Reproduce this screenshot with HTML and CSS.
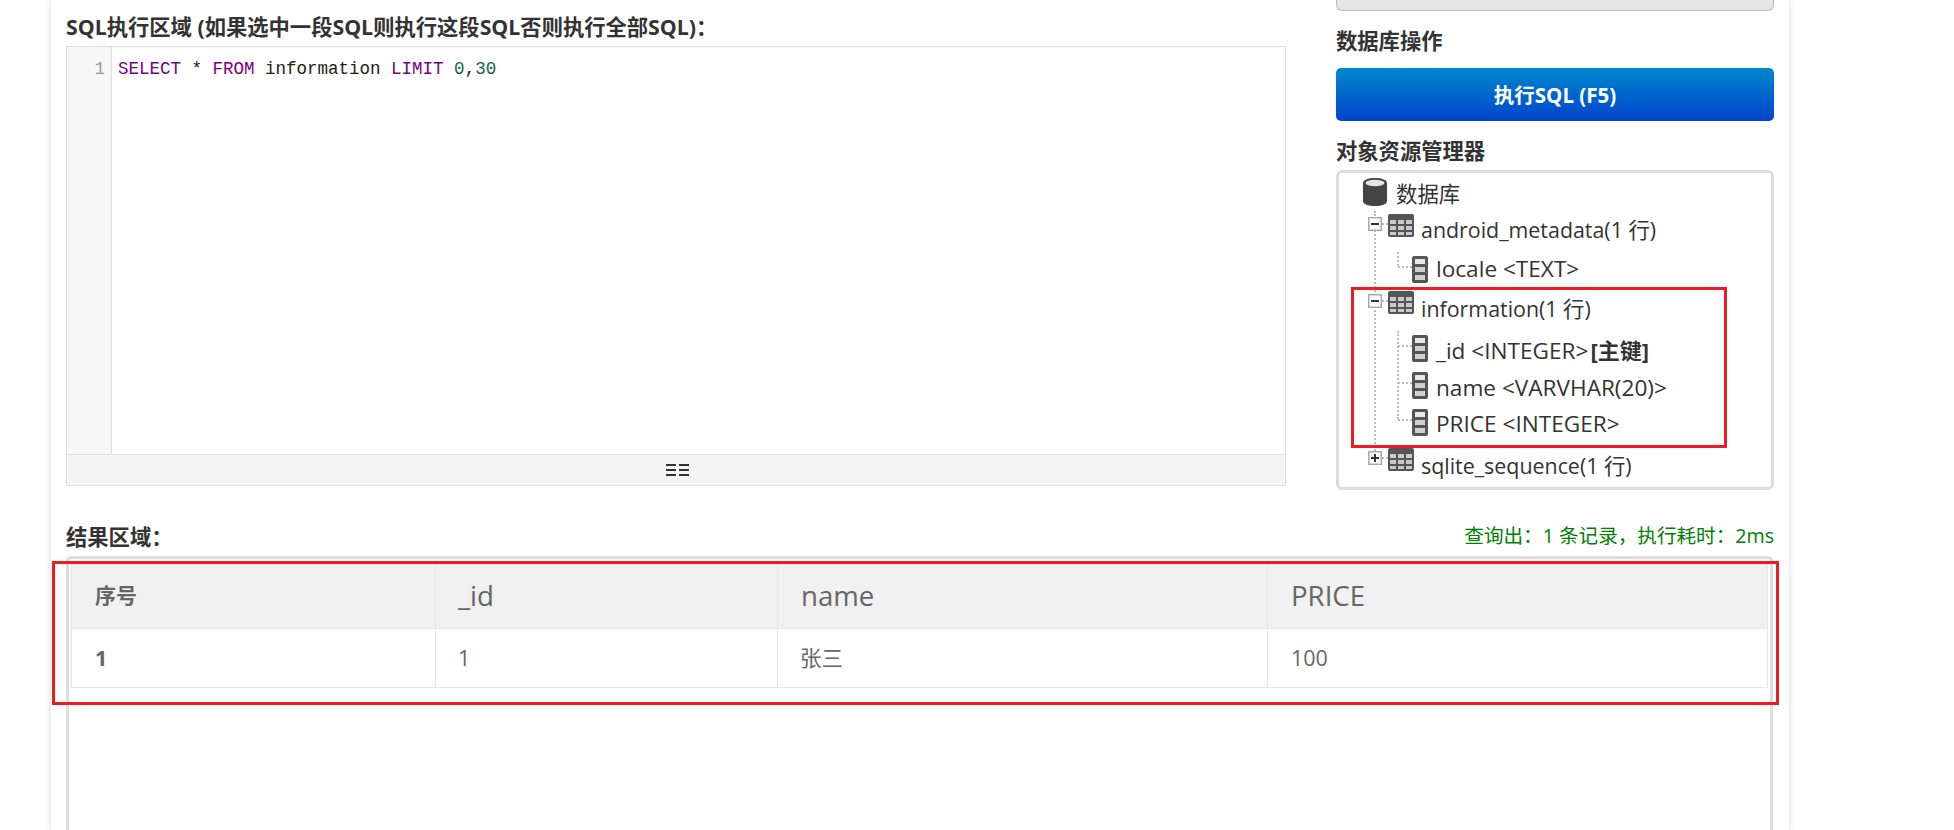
FILE: index.html
```html
<!DOCTYPE html>
<html lang="zh-CN">
<head>
<meta charset="utf-8">
<title>SQL</title>
<link rel="stylesheet" href="styles.css">
</head>
<body>
<svg class="defs" width="0" height="0" aria-hidden="true">
  <symbol id="i-table" viewBox="0 0 26 23">
    <rect x="0" y="0" width="26" height="23" rx="2" fill="#555"/>
    <g fill="#c9c9c9">
      <rect x="2" y="6" width="6" height="4"/><rect x="10" y="6" width="6" height="4"/><rect x="18" y="6" width="6" height="4"/>
      <rect x="2" y="12" width="6" height="4"/><rect x="10" y="12" width="6" height="4"/><rect x="18" y="12" width="6" height="4"/>
      <rect x="2" y="18" width="6" height="3"/><rect x="10" y="18" width="6" height="3"/><rect x="18" y="18" width="6" height="3"/>
    </g>
  </symbol>
  <symbol id="i-col" viewBox="0 0 16 27">
    <rect x="0" y="0" width="16" height="27" rx="2" fill="#555"/>
    <rect x="3" y="3" width="10" height="5" fill="#e8e8e8"/>
    <rect x="3" y="11" width="10" height="5" fill="#d0d0d0"/>
    <rect x="3" y="19" width="10" height="5" fill="#d0d0d0"/>
  </symbol>
  <symbol id="i-minus" viewBox="0 0 14 14">
    <rect x="0.75" y="0.75" width="12.5" height="12.5" fill="#fff" stroke="#aaa" stroke-width="1.5"/>
    <rect x="3" y="6" width="8" height="2" fill="#333"/>
  </symbol>
  <symbol id="i-plus" viewBox="0 0 14 14">
    <rect x="0.75" y="0.75" width="12.5" height="12.5" fill="#fff" stroke="#aaa" stroke-width="1.5"/>
    <rect x="3" y="6" width="8" height="2" fill="#333"/>
    <rect x="6" y="3" width="2" height="8" fill="#333"/>
  </symbol>
</svg>
<main class="card">
  <div class="top">
    <section class="left">
      <h2 class="title">SQL执行区域 (如果选中一段SQL则执行这段SQL否则执行全部SQL)：</h2>
      <div class="editor">
        <div class="editor-body">
          <div class="gutter">1</div>
          <div class="code"><span class="kw">SELECT</span> * <span class="kw">FROM</span> information <span class="kw">LIMIT</span> <span class="num">0</span>,<span class="num">30</span></div>
        </div>
        <div class="resize">
          <svg width="23" height="12" viewBox="0 0 23 12" aria-hidden="true">
            <path d="M0 1h10M0 6h10M0 11h10M13 1h10M13 6h10M13 11h10" stroke="#333" stroke-width="2" fill="none"/>
          </svg>
        </div>
      </div>
    </section>
    <aside class="right">
      <div class="stub"></div>
      <h2 class="title side-title">数据库操作</h2>
      <button class="run" type="button">执行SQL (F5)</button>
      <h2 class="title side-title2">对象资源管理器</h2>
      <div class="tree">
        <div class="row row-db">
          <svg class="ic-db" width="24" height="28" viewBox="0 0 24 28" aria-hidden="true">
            <path d="M0 5C0 2 5 0 12 0s12 2 12 5v18c0 3-5 5-12 5S0 26 0 23z" fill="#444"/>
            <ellipse cx="12" cy="5" rx="9.5" ry="3.2" fill="#e4e4e4"/>
          </svg>
          <span>数据库</span>
        </div>
        <div class="node">
          <div class="row row-t row-first">
            <svg class="ic-exp"><use href="#i-minus"/></svg><i class="dash"></i>
            <svg class="ic-t"><use href="#i-table"/></svg>
            <span>android_metadata(1 行)</span>
          </div>
          <div class="kids kids-one">
            <div class="row row-c row-lo">
              <i class="branch"></i><svg class="ic-c"><use href="#i-col"/></svg>
              <span>locale &lt;TEXT&gt;</span>
            </div>
          </div>
          <div class="row row-t row-info">
            <svg class="ic-exp"><use href="#i-minus"/></svg><i class="dash"></i>
            <svg class="ic-t"><use href="#i-table"/></svg>
            <span>information(1 行)</span>
          </div>
          <div class="kids">
            <div class="row row-c">
              <i class="branch"></i><svg class="ic-c"><use href="#i-col"/></svg>
              <span class="txt-id">_id &lt;INTEGER&gt;<b class="pk">[主键]</b></span>
            </div>
            <div class="row row-c">
              <i class="branch"></i><svg class="ic-c"><use href="#i-col"/></svg>
              <span class="txt-name">name &lt;VARVHAR(20)&gt;</span>
            </div>
            <div class="row row-c">
              <i class="branch"></i><svg class="ic-c"><use href="#i-col"/></svg>
              <span class="txt-id">PRICE &lt;INTEGER&gt;</span>
            </div>
          </div>
          <div class="row row-t row-last">
            <svg class="ic-exp"><use href="#i-plus"/></svg><i class="dash"></i>
            <svg class="ic-t"><use href="#i-table"/></svg>
            <span>sqlite_sequence(1 行)</span>
          </div>
        </div>
        <div class="mark mark-tree"></div>
      </div>
    </aside>
  </div>
  <div class="result-head">
    <h2 class="title">结果区域：</h2>
    <span class="stat">查询出：1 条记录，执行耗时：2ms</span>
  </div>
  <div class="result">
    <table class="grid">
      <colgroup><col class="c1"><col class="c2"><col class="c3"><col></colgroup>
      <thead><tr><th class="th-cn">序号</th><th class="th-id">_id</th><th>name</th><th>PRICE</th></tr></thead>
      <tbody><tr><td class="idx">1</td><td class="td-id">1</td><td class="td-cn">张三</td><td>100</td></tr></tbody>
    </table>
    <div class="mark mark-table"></div>
  </div>
</main>
</body>
</html>
```
FILE: styles.css
```css
* { box-sizing: border-box; }
html, body { margin: 0; height: 830px; overflow: hidden; background: #fff; }
body {
  font-family: "Open Sans", "Noto Sans CJK SC", sans-serif;
  color: #333;
}
.defs { position: absolute; }
.card {
  margin-left: 51px;
  width: 1738px;
  height: 830px;
  padding: 0 15px;
  background: #fff;
  box-shadow: 0 0 8px rgba(0,0,0,.14);
}
.top { display: flex; justify-content: space-between; height: 517px; }
.left { width: 1220px; padding-top: 14px; }
.right { width: 438px; }
.title {
  margin: 0;
  font-size: 21.3px;
  line-height: 26px;
  font-weight: 700;
  color: #333;
}
.left .title { height: 32px; }
.editor { height: 440px; border: 1px solid #ddd; display: flex; flex-direction: column; }
.editor-body { flex: 1; display: flex; min-height: 0; }
.gutter {
  width: 45px;
  padding: 12px 6px 0 0;
  text-align: right;
  background: #f7f7f7;
  border-right: 1px solid #ddd;
  color: #999;
  font: 17.5px/21px "Liberation Mono", monospace;
}
.code {
  padding: 12px 0 0 6px;
  font: 17.5px/21px "Liberation Mono", monospace;
  color: #221;
}
.kw { color: #708; }
.num { color: #164; }
.resize {
  display: flex;
  justify-content: center;
  align-items: center;
  height: 31px;
  background: #f5f5f5;
  border-top: 1px solid #ddd;
  padding-left: 3px;
}
.stub {
  height: 11px;
  background: #e6e6e6;
  border: 1px solid #bbb;
  border-top: 0;
  border-radius: 0 0 6px 6px;
}
.side-title { margin-top: 17px; }
.run {
  display: block;
  width: 100%;
  height: 53px;
  margin-top: 14px;
  border: 0;
  border-radius: 5px;
  color: #fff;
  font: 700 20.5px/53px "Open Sans", "Noto Sans CJK SC", sans-serif;
  background: linear-gradient(#0088cc, #0044cc);
}
.side-title2 { margin-top: 17px; }
.tree {
  position: relative;
  height: 320px;
  margin-top: 6px;
  padding: 5px 0 0 24px;
  border: 3px solid #ddd;
  border-radius: 6px;
  font-size: 21.4px;
  color: #333;
}
.row { display: flex; align-items: flex-start; white-space: nowrap; }
.row span { line-height: 34px; }
.row-db { height: 34px; gap: 9px; }
.row-db span { margin-top: -1px; }
.ic-db { flex: none; }
.node { position: relative; margin-left: 5px; }
.node::before {
  content: "";
  position: absolute;
  left: 6px;
  top: -1px;
  height: 240px;
  border-left: 2px dotted #bbb;
}
.row-t { position: relative; height: 40px; padding-top: 2px; }
.row-last { margin-top: 4px; }
.row-t span { margin: 1px 0 0 7px; }
.row-first span { margin-top: -1px; }
.ic-exp { width: 14px; height: 14px; margin-top: 3px; flex: none; position: relative; z-index: 1; }
.dash { width: 6px; margin-top: 9px; border-top: 2px dotted #bbb; flex: none; }
.ic-t { width: 26px; height: 23px; flex: none; }
.kids { position: relative; padding-left: 24px; margin-top: 2px; }
.kids-one { margin-top: 0; height: 37px; }
.kids::before {
  content: "";
  position: absolute;
  left: 29px;
  top: 0;
  height: 88px;
  border-left: 2px dotted #bbb;
}
.kids-one::before { height: 14px; }
.row-c { height: 37px; font-size: 22.6px; }
.row-c span { margin: -1px 0 0 8px; line-height: 36px; }
.row-c .txt-id { margin-top: 1px; }
.row-c .txt-name { margin-top: 2px; }
.branch { width: 14px; margin: 14px 0 0 6px; border-top: 2px dotted #bbb; flex: none; }
.ic-c { width: 16px; height: 27px; margin-top: 4px; flex: none; position: relative; }
.pk { font-weight: 700; margin-left: 2px; font-size: 22px; }
.mark { position: absolute; border: 3px solid #ed1c24; pointer-events: none; }
.mark-tree { left: 12px; top: 114px; width: 376px; height: 161px; }
.result-head {
  display: flex;
  justify-content: space-between;
  align-items: center;
  height: 39px;
}
.stat { color: #008000; font-size: 19.6px; padding-bottom: 4px; }
.result {
  position: relative;
  height: 300px;
  width: 1707px;
  padding: 4px 2px 0;
  border: 3px solid #ddd;
  border-bottom: 0;
  border-radius: 5px 5px 0 0;
}
.grid {
  width: 100%;
  border-collapse: collapse;
  table-layout: fixed;
  font-size: 21.5px;
  color: #666;
}
.c1 { width: 364px; }
.c2 { width: 342px; }
.c3 { width: 490px; }
.grid th, .grid td { border: 1px solid #e6e6e6; padding: 0 0 2px 23px; text-align: left; }
.grid th { height: 65px; background: #f1f1f1; font-size: 27.6px; font-weight: 400; }
.grid .th-cn { font-size: 21px; font-weight: 700; padding-bottom: 4px; }
.grid .th-id, .grid .td-id { padding-left: 22px; }
.grid .td-cn { padding-bottom: 4px; padding-left: 22px; }
.grid td { height: 59px; }
.idx { font-weight: 700; }
.mark-table { left: -17px; top: 2px; width: 1727px; height: 144px; }
```
